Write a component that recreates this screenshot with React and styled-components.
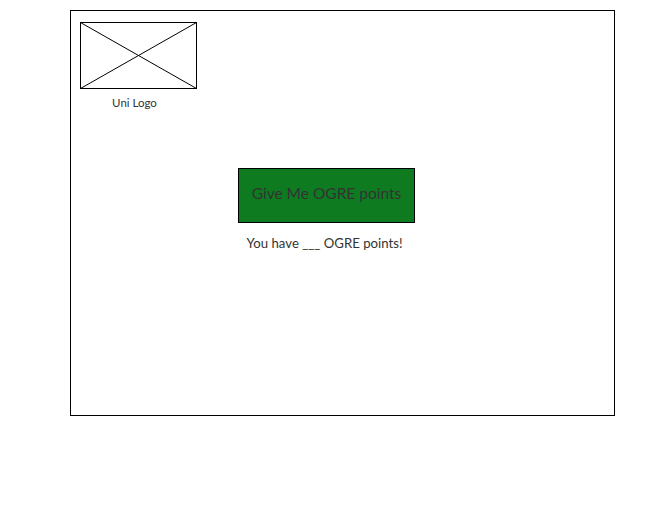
import React from "react";
import styled, { createGlobalStyle } from "styled-components";

const Global = createGlobalStyle`
  html, body { margin: 0; padding: 0; background: #fff; }
  body { font-family: Lato, "Open Sans", sans-serif; }
`;

const Frame = styled.div`
  box-sizing: border-box;
  margin: 10px 0 0 70px;
  width: 545px;
  height: 406px;
  border: 1px solid #000;
  padding: 11px 0 0 9px;
`;

const LogoColumn = styled.div`
  width: 117px;
  display: flex;
  flex-direction: column;
  align-items: center;
`;

const Placeholder = styled.svg`
  display: block;
  width: 117px;
  height: 67px;
`;

const Caption = styled.div`
  margin: 7px 8px 0 0;
  font-size: 11.5px;
  line-height: 14px;
  color: #333;
`;

const ActionArea = styled.div`
  margin: 58px 0 0 158px;
  width: 177px;
  display: flex;
  flex-direction: column;
  align-items: center;
`;

const GreenButton = styled.button`
  box-sizing: border-box;
  width: 177px;
  height: 55px;
  background: #0f7b21;
  border: 1px solid #000;
  color: #333;
  font-family: Lato, "Open Sans", sans-serif;
  font-size: 15.5px;
  padding: 0 0 6px;
  cursor: pointer;
`;

const Points = styled.div`
  margin: 11px 4px 0 0;
  font-size: 13.2px;
  line-height: 18px;
  color: #333;
  white-space: nowrap;
`;

export default function App() {
  return (
    <>
      <Global />
      <Frame>
        <LogoColumn>
          <Placeholder viewBox="0 0 117 67">
            <rect x="0.5" y="0.5" width="116" height="66" fill="#fff" stroke="#000" />
            <line x1="0.5" y1="0.5" x2="116.5" y2="66.5" stroke="#000" />
            <line x1="0.5" y1="66.5" x2="116.5" y2="0.5" stroke="#000" />
          </Placeholder>
          <Caption>Uni Logo</Caption>
        </LogoColumn>
        <ActionArea>
          <GreenButton>Give Me OGRE points</GreenButton>
          <Points>You have ___ OGRE points!</Points>
        </ActionArea>
      </Frame>
    </>
  );
}
